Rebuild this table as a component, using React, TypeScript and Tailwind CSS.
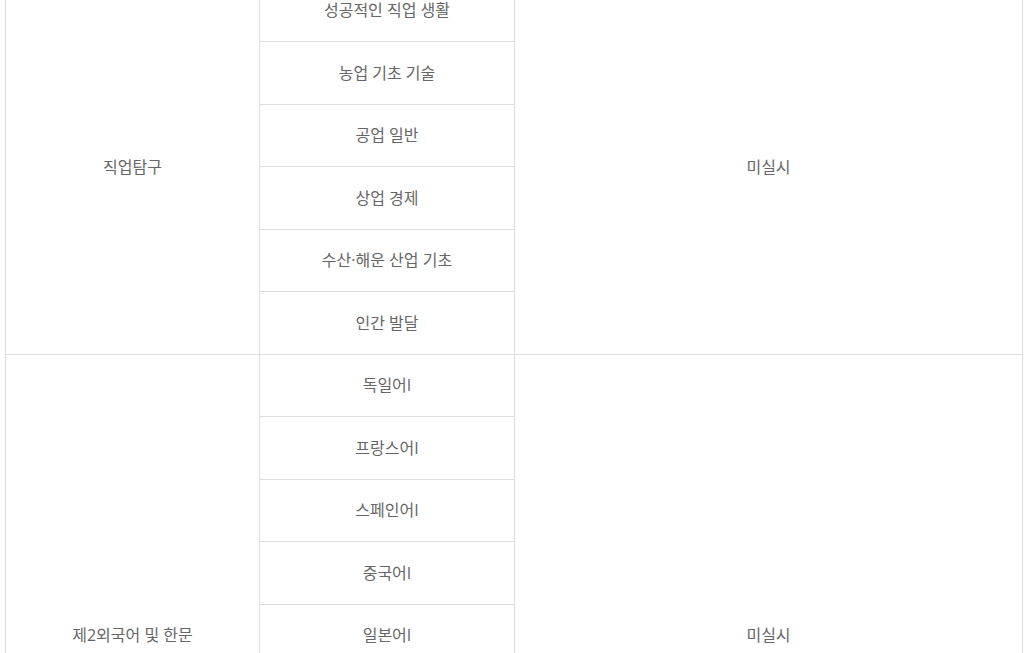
const GROUPS = [
  {
    area: "직업탐구",
    status: "미실시",
    subjects: [
      "성공적인 직업 생활",
      "농업 기초 기술",
      "공업 일반",
      "상업 경제",
      "수산·해운 산업 기초",
      "인간 발달",
    ],
  },
  {
    area: "제2외국어 및 한문",
    status: "미실시",
    subjects: [
      "독일어I",
      "프랑스어I",
      "스페인어I",
      "중국어I",
      "일본어I",
      "러시아어I",
      "아랍어I",
      "베트남어I",
      "한문I",
    ],
  },
];

const cell = "border border-[#dddddd] text-center align-middle";

export default function App() {
  return (
    <div
      className="h-[653px] overflow-hidden bg-white pl-[5px] pr-[4px] text-[16px] leading-6 text-[#666666]"
      style={{ fontFamily: '"Open Sans", "Noto Sans CJK KR", sans-serif' }}
    >
      <table className="mt-[-21.5px] w-full table-fixed border-collapse">
        <colgroup>
          <col className="w-[254px]" />
          <col className="w-[255px]" />
          <col />
        </colgroup>
        <tbody>
          {GROUPS.map((g) =>
            g.subjects.map((s, i) => (
              <tr key={g.area + s} className="h-[62.5px]">
                {i === 0 && (
                  <td rowSpan={g.subjects.length} className={cell}>
                    {g.area}
                  </td>
                )}
                <td className={cell}>{s}</td>
                {i === 0 && (
                  <td rowSpan={g.subjects.length} className={cell}>
                    {g.status}
                  </td>
                )}
              </tr>
            ))
          )}
        </tbody>
      </table>
    </div>
  );
}
